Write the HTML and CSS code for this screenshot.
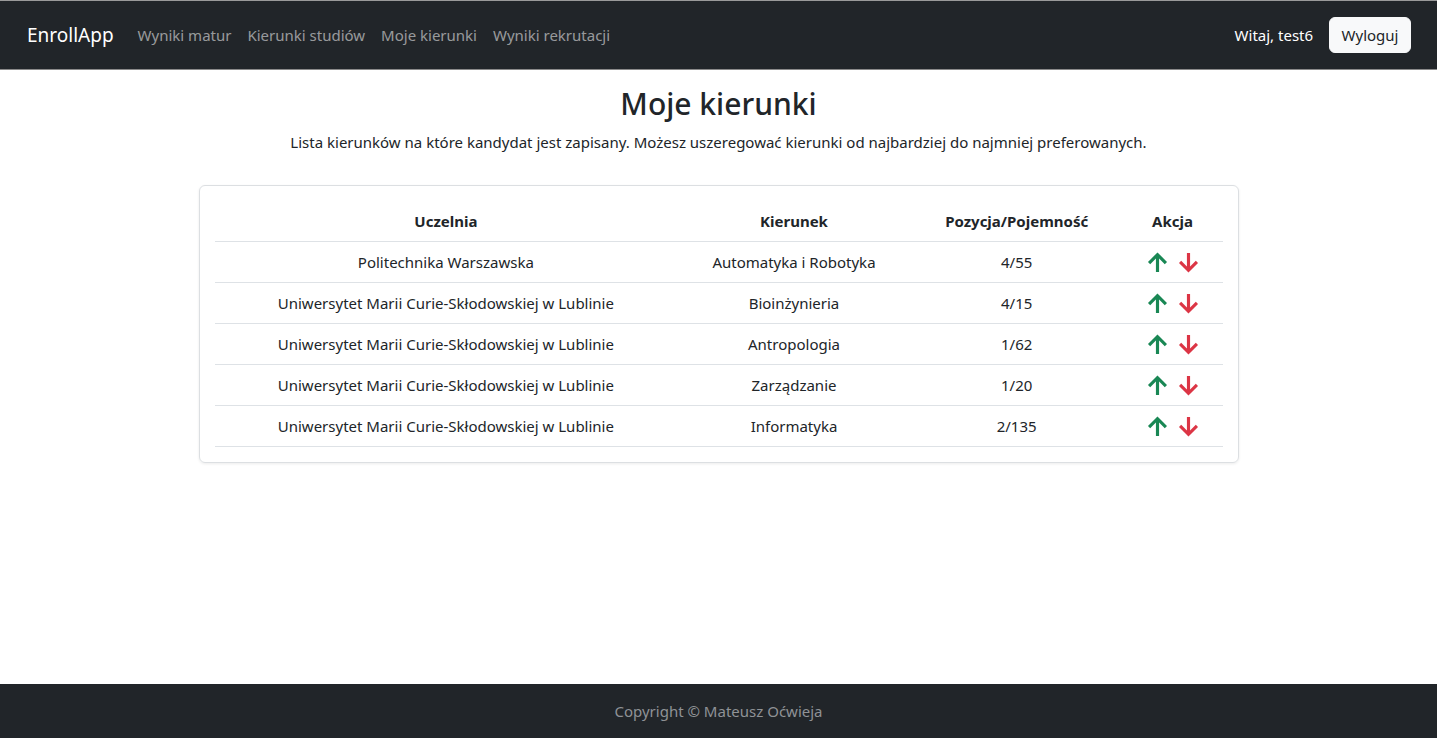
FILE: index.html
```html
<!DOCTYPE html>
<html lang="pl">
<head>
<meta charset="utf-8">
<title>EnrollApp</title>
<link rel="stylesheet" href="styles.css">
</head>
<body>
<div class="page">
  <nav class="navbar">
    <div class="nav-left">
      <a class="brand" href="#">EnrollApp</a>
      <ul class="nav-links">
        <li><a href="#">Wyniki matur</a></li>
        <li><a href="#">Kierunki studiów</a></li>
        <li><a href="#">Moje kierunki</a></li>
        <li><a href="#">Wyniki rekrutacji</a></li>
      </ul>
    </div>
    <div class="nav-right">
      <span class="greeting">Witaj, test6</span>
      <button class="logout">Wyloguj</button>
    </div>
  </nav>

  <main class="main">
    <h2 class="title">Moje kierunki</h2>
    <p class="lead">Lista kierunków na które kandydat jest zapisany. Możesz uszeregować kierunki od najbardziej do najmniej preferowanych.</p>

    <div class="card">
      <table class="table">
        <thead>
          <tr>
            <th class="c1">Uczelnia</th>
            <th class="c2">Kierunek</th>
            <th class="c3">Pozycja/Pojemność</th>
            <th class="c4">Akcja</th>
          </tr>
        </thead>
        <tbody>
          <tr>
            <td>Politechnika Warszawska</td>
            <td>Automatyka i Robotyka</td>
            <td>4/55</td>
            <td class="actions"><span class="up"><svg viewBox="0 0 20 20"><path d="M10 19V2.5M2 10.5l8-8 8 8"/></svg></span><span class="down"><svg viewBox="0 0 20 20"><path d="M10 1v16.5M2 9.5l8 8 8-8"/></svg></span></td>
          </tr>
          <tr>
            <td>Uniwersytet Marii Curie-Skłodowskiej w Lublinie</td>
            <td>Bioinżynieria</td>
            <td>4/15</td>
            <td class="actions"><span class="up"><svg viewBox="0 0 20 20"><path d="M10 19V2.5M2 10.5l8-8 8 8"/></svg></span><span class="down"><svg viewBox="0 0 20 20"><path d="M10 1v16.5M2 9.5l8 8 8-8"/></svg></span></td>
          </tr>
          <tr>
            <td>Uniwersytet Marii Curie-Skłodowskiej w Lublinie</td>
            <td>Antropologia</td>
            <td>1/62</td>
            <td class="actions"><span class="up"><svg viewBox="0 0 20 20"><path d="M10 19V2.5M2 10.5l8-8 8 8"/></svg></span><span class="down"><svg viewBox="0 0 20 20"><path d="M10 1v16.5M2 9.5l8 8 8-8"/></svg></span></td>
          </tr>
          <tr>
            <td>Uniwersytet Marii Curie-Skłodowskiej w Lublinie</td>
            <td>Zarządzanie</td>
            <td>1/20</td>
            <td class="actions"><span class="up"><svg viewBox="0 0 20 20"><path d="M10 19V2.5M2 10.5l8-8 8 8"/></svg></span><span class="down"><svg viewBox="0 0 20 20"><path d="M10 1v16.5M2 9.5l8 8 8-8"/></svg></span></td>
          </tr>
          <tr>
            <td>Uniwersytet Marii Curie-Skłodowskiej w Lublinie</td>
            <td>Informatyka</td>
            <td>2/135</td>
            <td class="actions"><span class="up"><svg viewBox="0 0 20 20"><path d="M10 19V2.5M2 10.5l8-8 8 8"/></svg></span><span class="down"><svg viewBox="0 0 20 20"><path d="M10 1v16.5M2 9.5l8 8 8-8"/></svg></span></td>
          </tr>
        </tbody>
      </table>
    </div>
  </main>

  <footer class="footer">Copyright © Mateusz Oćwieja</footer>
</div>
</body>
</html>
```

FILE: styles.css
```css
* { box-sizing: border-box; }
html, body { margin: 0; padding: 0; height: 100%; }
body {
  font-family: "Noto Sans", "DejaVu Sans", sans-serif;
  font-size: 15px;
  line-height: 1.5;
  color: #212529;
  background: #fff;
}
.page {
  min-height: 100%;
  display: flex;
  flex-direction: column;
}
.navbar {
  height: 70px;
  background: #212529;
  border-top: 1px solid #9a9a9a;
  border-bottom: 1px solid #8a8a8a;
  display: flex;
  align-items: center;
  justify-content: space-between;
  padding: 0 26px 0 27px;
}
.nav-left { display: flex; align-items: center; }
.brand {
  color: #fff;
  text-decoration: none;
  font-size: 19px;
  margin-right: 16px;
}
.nav-links {
  list-style: none;
  margin: 0;
  padding: 0;
  display: flex;
}
.nav-links a {
  display: block;
  padding: 8px 8px;
  color: rgba(255,255,255,.55);
  text-decoration: none;
}
.nav-right { display: flex; align-items: center; }
.greeting { color: #fff; margin-right: 16px; }
.logout {
  font-family: inherit;
  font-size: 15px;
  color: #212529;
  background: #f8f9fa;
  border: 1px solid #f8f9fa;
  border-radius: 6px;
  height: 36px;
  padding: 0 11.5px;
  line-height: 1.5;
}
.main {
  flex: 1;
  display: flex;
  flex-direction: column;
  align-items: center;
  padding-top: 16px;
}
.title {
  font-size: 30px;
  font-weight: 500;
  line-height: 1.2;
  margin: 0 0 9px;
}
.lead {
  margin: 0 0 31px;
}
.card {
  width: 1040px;
  border: 1px solid #dcdfe2;
  border-radius: 6px;
  box-shadow: 0 1px 3px rgba(0,0,0,.08);
  padding: 15px;
}
.table {
  width: 100%;
  border-collapse: collapse;
}
.table th, .table td {
  text-align: center;
  padding: 8px;
  border-bottom: 1px solid #dee2e6;
  line-height: 24px;
  height: 41px;
}
.table th { font-weight: 700; }
.c1 { width: 464px; }
.c2 { width: 234px; }
.c3 { width: 212px; }
.c4 { width: 100px; }
.actions { white-space: nowrap; }
.actions span {
  display: inline-block;
  width: 21px;
  height: 21px;
  vertical-align: top;
  margin: 2px 5px 0;
}
.actions svg {
  width: 21px;
  height: 21px;
  display: block;
  fill: none;
  stroke-width: 3;
  stroke-linecap: butt;
  stroke-linejoin: miter;
}
.up svg { stroke: #198754; }
.down svg { stroke: #dc3545; }
.footer {
  height: 54px;
  background: #212529;
  color: #8f9296;
  display: flex;
  align-items: center;
  justify-content: center;
}
```
